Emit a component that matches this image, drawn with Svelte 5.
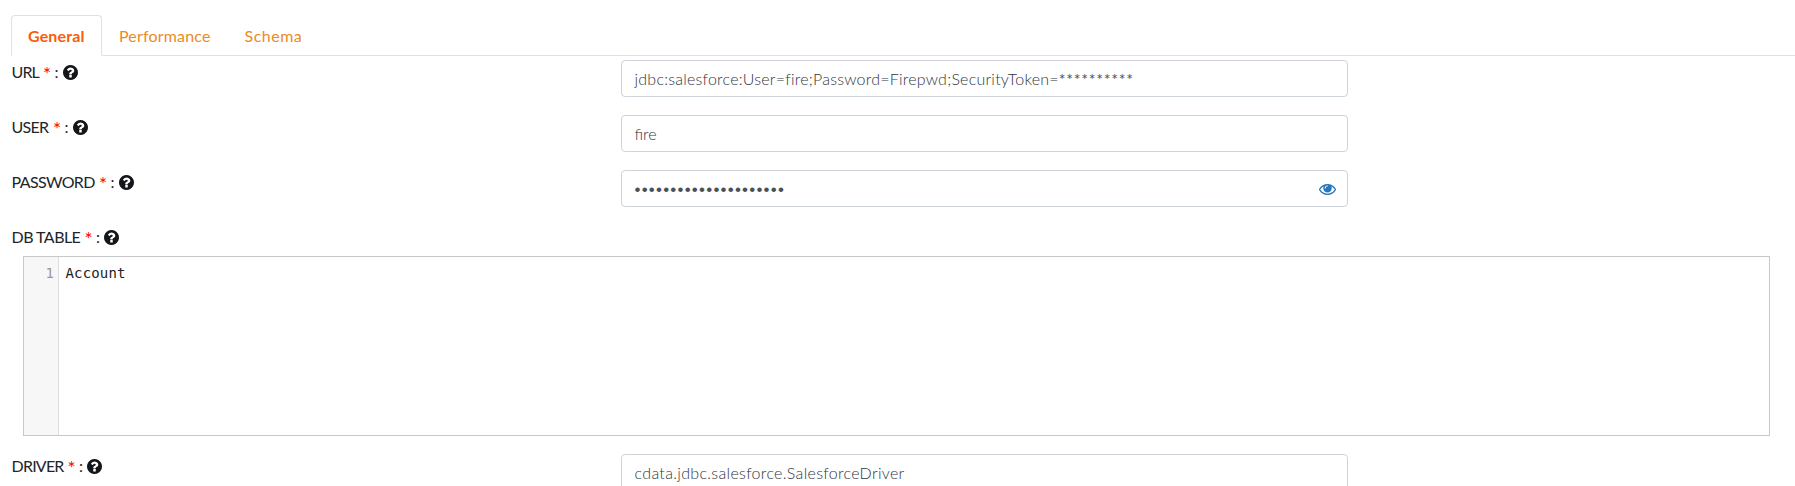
<script>
  const tabs = [
    { name: 'General', active: true, spacing: 0.15 },
    { name: 'Performance', spacing: 0.17 },
    { name: 'Schema', spacing: 0.5 }
  ];
  const fields = [
    { name: 'URL', width: 32, spacing: -0.95 },
    { name: 'USER', width: 42, spacing: -0.75 },
    { name: 'PASSWORD', width: 88, spacing: -0.65 },
    { name: 'DB TABLE', width: 73.5, spacing: -0.55 },
    { name: 'DRIVER', width: 56.5, spacing: -0.8 }
  ];
  const [url, user, password, table, driver] = fields;
  const dots = '•'.repeat(21);
</script>

{#snippet label(field)}
  <div class="label">
    <span class="name" style="width:{field.width}px;letter-spacing:{field.spacing}px">{field.name}</span>
    <span class="star">*</span>
    <span class="colon">:</span>
    <svg class="help" viewBox="0 0 1536 1536" aria-hidden="true">
      <path fill="#141619" d="M896 1248v-192q0-14-9-23t-23-9H672q-14 0-23 9t-9 23v192q0 14 9 23t23 9h192q14 0 23-9t9-23zm256-672q0-88-55.500-163T958 297t-170-41q-243 0-371 213-15 24 8 42l132 100q7 6 19 6 16 0 25-12 53-68 86-92 34-24 86-24 48 0 85.500 26t37.500 59q0 38-20 61t-68 45q-63 28-115.500 86.500T640 892v36q0 14 9 23t23 9h192q14 0 23-9t9-23q0-19 21.500-49.500T972 829q32-18 49-28.500t46-35 44.500-48 28-60.500 12.500-81zm384 192q0 209-103 385.500T1153.500 1433 768 1536t-385.500-103T103 1153.500 0 768t103-385.500T382.500 103 768 0t385.500 103T1433 382.500 1536 768z" />
    </svg>
  </div>
{/snippet}

<main>
  <nav>
    {#each tabs as tab}
      <span class="tab" class:active={tab.active} style="letter-spacing:{tab.spacing}px">{tab.name}</span>
    {/each}
  </nav>

  <section class="form">
    <div class="row">
      {@render label(url)}
      <div class="input"><span class="dsn">jdbc:salesforce:User=fire;Password=Firepwd;SecurityToken=</span><span class="mask">**********</span></div>
    </div>
    <div class="row">
      {@render label(user)}
      <div class="input">fire</div>
    </div>
    <div class="row">
      {@render label(password)}
      <div class="input secret">
        <span class="dots">{dots}</span>
        <svg class="eye" viewBox="0 0 1792 1152" aria-hidden="true">
          <path fill="#2676bb" d="M1664 576q-152-236-381-353 61 104 61 225 0 185-131.500 316.500T896 896 579.500 764.500 448 448q0-121 61-225-229 117-381 353 133 205 333.500 326.500T896 1024t434.500-121.500T1664 576zM944 192q0-20-14-34t-34-14q-125 0-214.500 89.500T592 448q0 20 14 34t34 14 34-14 14-34q0-86 61-147t147-61q20 0 34-14t14-34zm848 384q0 34-20 69-140 230-376.500 368.500T896 1152t-499.500-139T20 645Q0 610 0 576t20-69q140-229 376.500-368T896 0t499.500 139T1772 507q20 35 20 69z" />
        </svg>
      </div>
    </div>
    <div class="table-label">{@render label(table)}</div>
    <div class="editor">
      <div class="gutter">1</div>
      <div class="code">Account</div>
    </div>
    <div class="row">
      {@render label(driver)}
      <div class="input driver">cdata.jdbc.salesforce.SalesforceDriver</div>
    </div>
  </section>
</main>

<style>
  :global(body) { background: #fff; }
  main {
    box-sizing: border-box;
    height: 486px;
    overflow: hidden;
    padding: 15px 0 0 11px;
    font-family: Lato, sans-serif;
    font-size: 16px;
    line-height: 24px;
    color: #212529;
    white-space: nowrap;
  }
  nav {
    box-sizing: border-box;
    display: flex;
    height: 41px;
    border-bottom: 1px solid #dee2e6;
  }
  .tab {
    box-sizing: border-box;
    height: 41px;
    padding: 8px 16px 0;
    border: 1px solid transparent;
    color: #ee8a1d;
  }
  .tab.active {
    width: 91px;
    border-color: #dee2e6 #dee2e6 #fff;
    border-radius: 4px 4px 0 0;
    background: #fff;
    color: #fa5c0c;
    font-weight: 700;
  }
  .form { padding-top: 4px; }
  .row {
    display: grid;
    grid-template-columns: 610px 727px;
    height: 55px;
  }
  .label { display: flex; height: 25px; }
  .name { flex: none; box-sizing: border-box; padding-left: 0.6px; }
  .star { width: 11.5px; color: #f00; font-size: 19px; line-height: 27px; }
  .colon { width: 8px; }
  .help { width: 15px; height: 15px; margin-top: 4.5px; }
  .input {
    box-sizing: border-box;
    display: flex;
    align-items: center;
    height: 37px;
    padding: 1px 12.5px 0;
    border: 1px solid #ced4da;
    border-radius: 4px;
    color: #30363c;
    font-weight: 300;
  }
  .dsn { letter-spacing: 0.23px; }
  .mask { letter-spacing: 0.7px; font-weight: 400; color: #495057; }
  .driver { letter-spacing: 0.32px; }
  .secret { justify-content: space-between; padding-right: 11px; }
  .dots {
    padding-top: 1px;
    font-family: "Liberation Sans", sans-serif;
    font-size: 17px;
    font-weight: 400;
    letter-spacing: 1.22px;
    color: #495057;
  }
  .eye { width: 17px; height: 11px; }
  .table-label { height: 31px; }
  .editor {
    box-sizing: border-box;
    display: flex;
    width: 1747px;
    height: 180px;
    margin: 0 0 18px 12px;
    border: 1px solid #c8c8c8;
    font: 14px/21px "DejaVu Sans Mono", monospace;
    letter-spacing: 0.15px;
    color: #222;
  }
  .gutter {
    box-sizing: border-box;
    width: 35px;
    padding: 6px 4px 0 0;
    border-right: 1px solid #ddd;
    background: #f7f7f7;
    color: #999;
    text-align: right;
  }
  .code { padding: 6px 0 0 6.5px; }
</style>
